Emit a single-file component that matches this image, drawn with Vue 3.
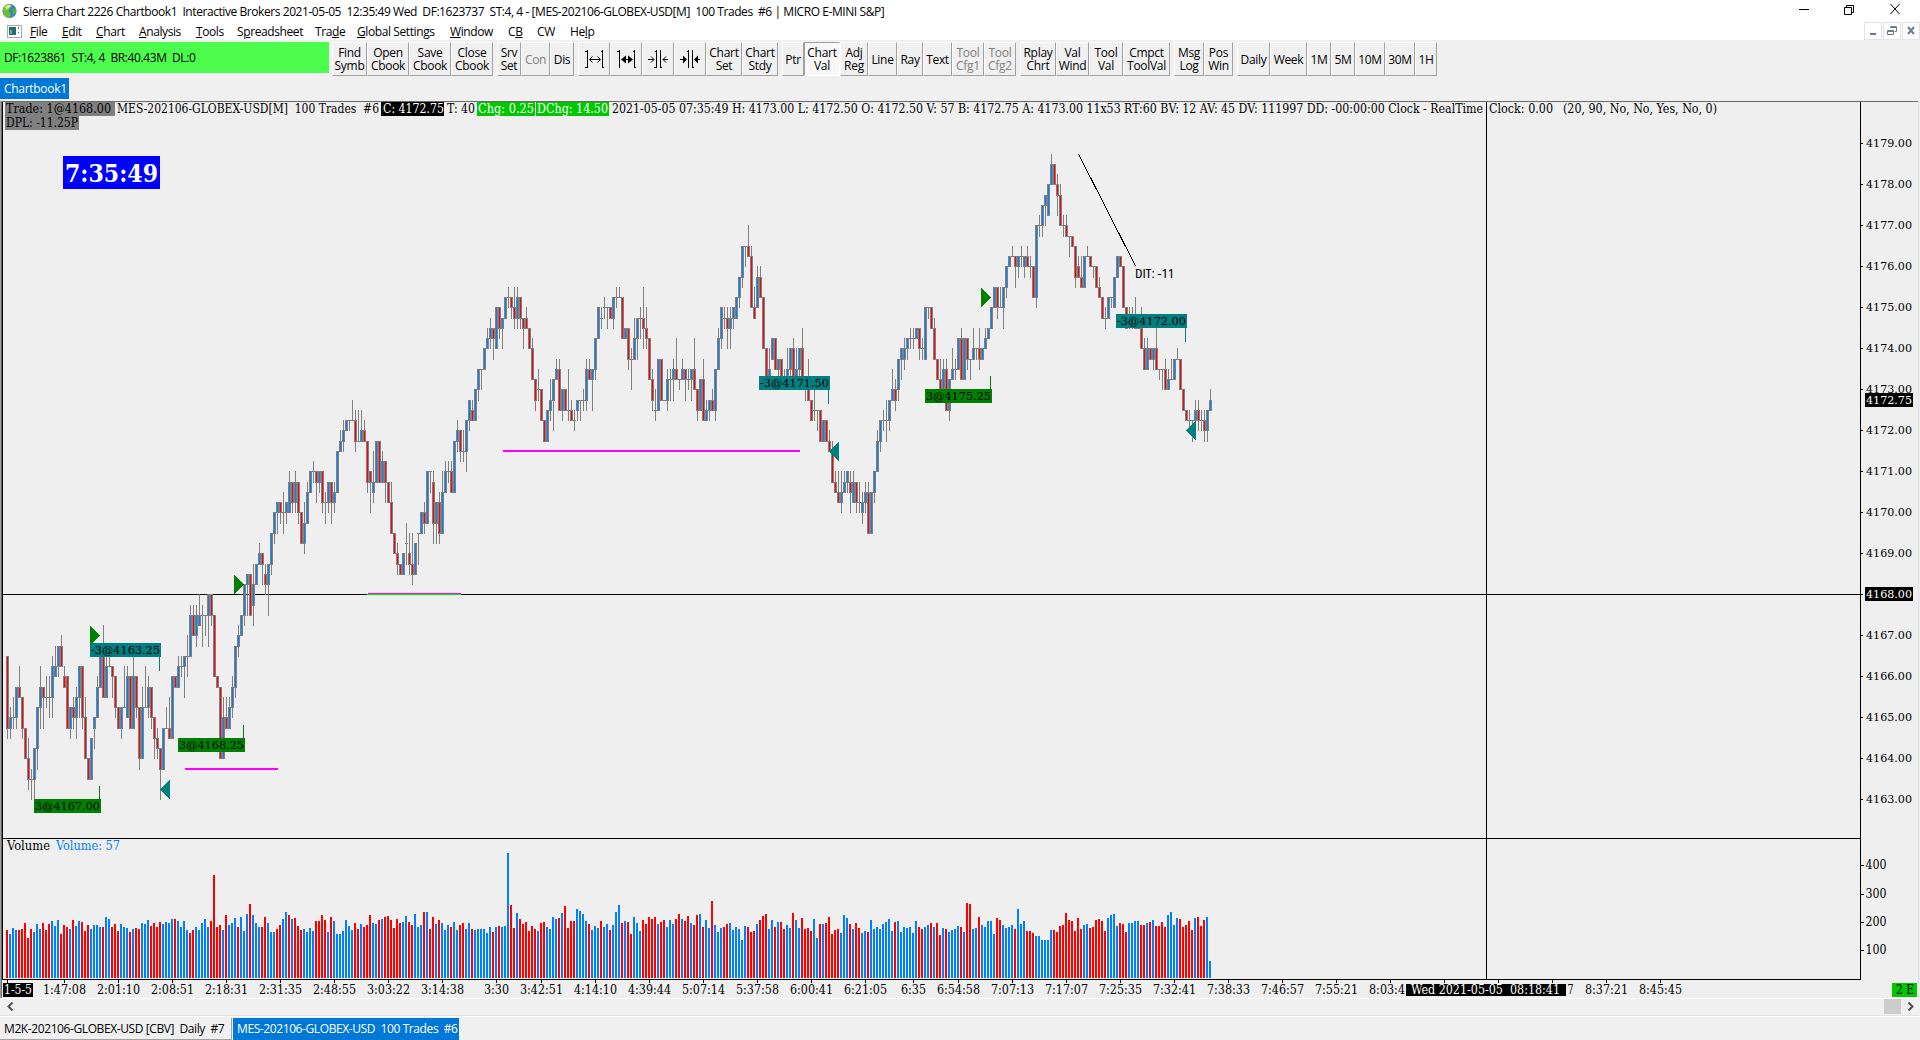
<template>
  <div class="app">
    <header class="title-bar">
      <svg class="globe" width="16" height="16" viewBox="0 0 16 16">
        <circle cx="7.5" cy="8" r="7" fill="#2f86c6" />
        <path d="M2 3.5C5 0 9 .5 10 2.500L8 6 6.500 8.500 9 11 7.500 15C3 14.500.5 11 .7 7z" fill="#6cc030" />
        <path d="M3 4C5 1.500 8 1.500 9 3L6 5.500 4 7z" fill="#e6f29a" />
        <path d="M11 5l3 1 .3 3-2.300 3-1.500-3z" fill="#58b030" />
      </svg>
      <span class="title-text">Sierra Chart 2226 Chartbook1&nbsp; Interactive Brokers 2021-05-05&nbsp; 12:35:49 Wed&nbsp; DF:1623737&nbsp; ST:4, 4 - [MES-202106-GLOBEX-USD[M]&nbsp; 100 Trades&nbsp; #6 | MICRO E-MINI S&amp;P]</span>
      <svg class="window-buttons" width="104" height="14" viewBox="0 0 104 14" fill="none" stroke="#000">
        <path d="M0 7.500h10M45.500 5.500h7v7h-7zM47.500 5.500v-2h7v7h-2M91.500 2l9 10M100.500 2l-9 10" />
      </svg>
    </header>

    <nav class="menu-bar">
      <svg class="doc-icon" width="15" height="13" viewBox="0 0 15 13">
        <rect x=".5" y=".5" width="14" height="12" fill="#fff" stroke="#aaa" />
        <rect x="2" y="2" width="7" height="8" fill="#2c6a72" />
        <path d="M3 9V5h2v4z" fill="#5ac08a" />
        <path d="M11.500 2v2M11.500 7v1" stroke="#666" />
      </svg>
      <span v-for="item in menu" :key="item.pre + item.key" :style="{ width: item.width + 'px' }" class="menu-item">{{ item.pre }}<u>{{ item.key }}</u>{{ item.post }}</span>
      <div class="mdi-buttons">
        <span><svg width="16" height="16" viewBox="0 0 16 16"><path d="M5 10h6v2H5z" fill="#6b7b8d" /></svg></span>
        <span><svg width="16" height="16" viewBox="0 0 16 16"><path d="M6.500 3.500h6v5h-2M3.500 7.500h6v4h-6zM6 4.500h7M3 8.500h7" fill="none" stroke="#6b7b8d" /></svg></span>
        <span><svg width="16" height="16" viewBox="0 0 16 16"><path d="M5 4l6 7M11 4l-6 7" stroke="#6b7b8d" stroke-width="2" /></svg></span>
      </div>
    </nav>

    <div class="toolbar">
      <div class="status">DF:1623861&nbsp; ST:4, 4&nbsp; BR:40.43M&nbsp; DL:0</div>
      <div v-for="(group, g) in toolGroups" :key="g" class="tool-group">
        <button
          v-for="tool in group"
          :key="tool.text"
          class="tool"
          :class="{ disabled: tool.off, pressed: tool.on }"
          :style="{ width: tool.width + 'px' }"
        >
          <svg v-if="tool.icon" width="20" height="22" viewBox="0 0 20 22" fill="none" stroke="#000">
            <path :d="tool.icon" />
            <path v-if="tool.heads" :d="tool.heads" fill="#000" stroke="none" />
          </svg>
          <template v-else>{{ tool.text }}</template>
        </button>
      </div>
    </div>

    <div class="book-tabs"><span class="book-tab">Chartbook1</span></div>

    <main class="chart">
      <svg width="1920" height="897" viewBox="0 101 1920 897">
        <rect x="0" y="101" width="1918" height="1" fill="#696969" />
        <rect x="0" y="101" width="1" height="897" fill="#a0a0a0" />
        <rect x="1" y="102" width="1" height="896" fill="#696969" />
        <rect x="2" y="102" width="1" height="878" fill="#000" />
        <rect x="1918" y="102" width="1" height="896" fill="#e3e3e3" />

        <!-- axes and panes -->
        <rect x="1860" y="102" width="1" height="878" />
        <rect x="3" y="838" width="1858" height="1" />
        <rect x="3" y="979" width="1858" height="1" />
        <rect x="3" y="594" width="1860" height="1" />

        <g v-for="p in prices" :key="p">
          <rect x="1861" :y="priceY((p - 4168) * 4)" width="2" height="1" />
          <text x="1866" :y="priceY((p - 4168) * 4) + 4" class="wide" textLength="46" lengthAdjust="spacingAndGlyphs">{{ p }}.00</text>
        </g>
        <g v-for="v in [100, 200, 300, 400]" :key="v">
          <rect x="1861" :y="Math.round(978.500 - v * 0.283)" width="3" height="1" />
          <text x="1865.500" :y="Math.round(978.500 - v * 0.283) + 4" textLength="21" lengthAdjust="spacingAndGlyphs">{{ v }}</text>
        </g>
        <rect x="1865" y="393" width="48" height="14" />
        <text x="1866" y="404" class="wide light" textLength="46" lengthAdjust="spacingAndGlyphs">4172.75</text>
        <rect x="1865" y="587" width="48" height="14" />
        <text x="1866" y="598" class="wide light" textLength="46" lengthAdjust="spacingAndGlyphs">4168.00</text>

        <!-- price bars -->
        <g v-for="c in candles" :key="c.x">
          <rect :x="c.x" :y="c.high" width="1" :height="c.low - c.high + 1" fill="#808080" />
          <rect :x="c.x - 1" :y="c.top" width="3" :height="c.bottom - c.top + 1" fill="#808080" />
          <rect v-if="c.bottom > c.top" :x="c.x" :y="c.top + 1" width="1" :height="c.bottom - c.top - 1" :fill="c.color" />
        </g>

        <!-- volume bars -->
        <rect v-for="v in volumes" :key="v.x" :x="v.x" :y="978 - v.height" width="2" :height="v.height" :fill="v.color" />

        <!-- support lines -->
        <path d="M185 769h93M503 451h297" stroke="#f0f" stroke-width="2" />
        <rect x="368" y="593" width="93" height="1" fill="#f0f" />
        <rect x="367" y="594" width="94" height="1" fill="#00f000" />

        <!-- fills -->
        <g v-for="f in fills" :key="f.text + f.x">
          <rect :x="f.stem" :y="f.stemY" width="1" height="14" :fill="f.color" />
          <rect :x="f.x" :y="f.y" :width="f.width" height="14" :fill="f.color" />
          <text :x="f.x + 1" :y="f.y + 11" class="wide" :textLength="f.width - 2" lengthAdjust="spacingAndGlyphs">{{ f.text }}</text>
        </g>
        <path d="M90 626l10 9.500-10 9.500zM234 575l10 9.500-10 9.500zM981 288l10 9.500-10 9.500z" fill="#008000" />
        <path d="M170 780l-10 9.500 10 9.500zM839 442l-10 9.500 10 9.500zM1196 421l-10 9.500 10 9.500z" fill="#008080" />

        <path d="M1078.500 154l57 112" stroke="#000" fill="none" />
        <text x="1135" y="278" class="ui" textLength="39" lengthAdjust="spacingAndGlyphs">DIT: -11</text>

        <rect x="1486" y="102" width="1" height="877" />

        <!-- chart header -->
        <rect x="5" y="102" width="110" height="14" fill="#808080" />
        <rect x="5" y="116" width="74" height="14" fill="#808080" />
        <rect x="381" y="102" width="63" height="14" />
        <rect x="477" y="102" width="58" height="14" fill="#00c800" />
        <rect x="536" y="102" width="73" height="14" fill="#00c800" />
        <text
          v-for="h in header"
          :key="h.text"
          :x="h.x"
          :y="h.y || 113"
          :textLength="h.end - h.x"
          :fill="h.fill || '#000'"
          lengthAdjust="spacingAndGlyphs"
        >{{ h.text }}</text>

        <rect x="63" y="156" width="97" height="33" fill="#00f" />
        <text x="65" y="182" class="clock" textLength="93" lengthAdjust="spacingAndGlyphs">7:35:49</text>

        <!-- time axis -->
        <g v-for="t in times" :key="t.x">
          <rect :x="t.x" y="980" width="1" height="3" />
          <text v-if="t.text" :x="t.x + 0.500" y="994" text-anchor="middle" :textLength="t.text.length > 4 ? 43 : 25" lengthAdjust="spacingAndGlyphs">{{ t.text }}</text>
        </g>
        <text x="1369" y="994" textLength="36" lengthAdjust="spacingAndGlyphs">8:03:4</text>
        <text x="1567.500" y="994" textLength="6" lengthAdjust="spacingAndGlyphs">7</text>
        <rect x="3" y="983" width="30" height="14" />
        <text x="4" y="994" class="light" textLength="28" lengthAdjust="spacingAndGlyphs">1-5-5</text>
        <rect x="1406" y="984" width="160" height="12" />
        <text x="1411" y="994" class="light" textLength="149" lengthAdjust="spacingAndGlyphs">Wed 2021-05-05&nbsp; 08:18:41</text>
        <rect x="1892" y="983" width="25" height="14" fill="#00c800" />
        <text x="1896" y="994" textLength="18" lengthAdjust="spacingAndGlyphs">2 E</text>
      </svg>
    </main>

    <div class="scrollbar">
      <svg width="7" height="9" viewBox="0 0 7 9"><path d="M5.500 .5l-4 4 4 4" fill="none" stroke="#505050" stroke-width="2" /></svg>
      <span class="thumb"></span>
      <svg width="7" height="9" viewBox="0 0 7 9"><path d="M1.500 .5l4 4-4 4" fill="none" stroke="#505050" stroke-width="2" /></svg>
    </div>

    <footer class="sheet-tabs">
      <span class="sheet first">M2K-202106-GLOBEX-USD [CBV]&nbsp; Daily&nbsp; #7</span>
      <span class="sheet active">MES-202106-GLOBEX-USD&nbsp; 100 Trades&nbsp; #6</span>
    </footer>
  </div>
</template>

<script setup>
const menu = [
  { pre: '', key: 'F', post: 'ile', width: 18 },
  { pre: '', key: 'E', post: 'dit', width: 20 },
  { pre: '', key: 'C', post: 'hart', width: 29 },
  { pre: '', key: 'A', post: 'nalysis', width: 43 },
  { pre: '', key: 'T', post: 'ools', width: 27 },
  { pre: 'S', key: 'p', post: 'readsheet', width: 64 },
  { pre: 'Tra', key: 'd', post: 'e', width: 28 },
  { pre: '', key: 'G', post: 'lobal Settings', width: 79 },
  { pre: '', key: 'W', post: 'indow', width: 44 },
  { pre: 'C', key: 'B', post: '', width: 15 },
  { pre: 'CW', key: '', post: '', width: 19 },
  { pre: 'He', key: 'l', post: 'p', width: 25 }
]

const toolGroups = [
  [
    { text: 'Find Symb', width: 35 },
    { text: 'Open Cbook', width: 42 },
    { text: 'Save Cbook', width: 42 },
    { text: 'Close Cbook', width: 42 }
  ],
  [
    { text: 'Srv Set', width: 24 },
    { text: 'Con', width: 29, off: true },
    { text: 'Dis', width: 24 }
  ],
  [
    { text: 'i1', width: 32, icon: 'M3.500 2v18M18.500 2v18M1 3.500h2M1 19.500h2M17 3.500h1M19 19.500h1M6 11.500h10M8.500 8.500l-3 3 3 3M13.500 8.500l3 3-3 3' },
    { text: 'i2', width: 32, icon: 'M3.500 2v18M18.500 2v18M1 3.500h2M17 3.500h1M19 19.500h1M6 11.500h10', heads: 'M5 11.500l5-4v8zM17 11.500l-5-4v8z' },
    { text: 'i3', width: 32, icon: 'M8.500 2v18M12.500 2v18M7 3.500h1M6 19.500h2M13 19.500h1M0 11.500h6M21 11.500h-6M3 8.500l3 3-3 3M18 8.500l-3 3 3 3' },
    { text: 'i4', width: 32, icon: 'M8.500 2v18M12.500 2v18M7 3.500h1M13 19.500h1M0 11.500h6M21 11.500h-6', heads: 'M7 11.500l-4-4v8zM14 11.500l4-4v8z' },
    { text: 'Chart Set', width: 36 },
    { text: 'Chart Stdy', width: 36 }
  ],
  [
    { text: 'Ptr', width: 22 },
    { text: 'Chart Val', width: 36, on: true },
    { text: 'Adj Reg', width: 28 },
    { text: 'Line', width: 29 },
    { text: 'Ray', width: 26 },
    { text: 'Text', width: 29 },
    { text: 'Tool Cfg1', width: 32, off: true },
    { text: 'Tool Cfg2', width: 32, off: true }
  ],
  [
    { text: 'Rplay Chrt', width: 36 },
    { text: 'Val Wind', width: 33 },
    { text: 'Tool Val', width: 34 },
    { text: 'Cmpct ToolVal', width: 47 }
  ],
  [
    { text: 'Msg Log', width: 30 },
    { text: 'Pos Win', width: 29 }
  ],
  [
    { text: 'Daily', width: 33 },
    { text: 'Week', width: 37 },
    { text: '1M', width: 24 },
    { text: '5M', width: 24 },
    { text: '10M', width: 30 },
    { text: '30M', width: 30 },
    { text: '1H', width: 22 }
  ]
]

const header = [
  { text: 'Trade: 1@4168.00', x: 6, end: 111 },
  { text: 'DPL: -11.25P', x: 6, end: 78, y: 127 },
  { text: 'MES-202106-GLOBEX-USD[M]\u00a0 100 Trades\u00a0 #6', x: 117, end: 379 },
  { text: 'C: 4172.75', x: 383, end: 444, fill: '#fff' },
  { text: 'T: 40', x: 447, end: 475 },
  { text: 'Chg: 0.25', x: 478, end: 534, fill: '#fff' },
  { text: 'DChg: 14.50', x: 537, end: 608, fill: '#fff' },
  { text: '2021-05-05 07:35:49 H: 4173.00 L: 4172.50 O: 4172.50 V: 57 B: 4172.75 A: 4173.00 11x53 RT:60 BV: 12 AV: 45 DV: 111997 DD: -00:00:00 Clock - RealTime', x: 612, end: 1483 },
  { text: 'Clock: 0.00', x: 1489, end: 1553 },
  { text: '(20, 90, No, No, Yes, No, 0)', x: 1563, end: 1717 },
  { text: 'Volume', x: 7, end: 50, y: 850 },
  { text: 'Volume: 57', x: 56, end: 120, y: 850, fill: '#0080ff' }
]

const prices = Array.from({ length: 17 }, (_, i) => 4163 + i)

// one tick is 0.25 points, level 0 sits at 4168.00
const priceY = (tick) => Math.floor(594.9 - tick * 10.25)
const barX = (i) => 7 + i * 3

// open high low close, in ticks from 4168.00
const bars = `
-6 -6 -14 -13,-13 -11 -14 -12,-12 -10 -13 -12,-12 -9 -13 -9,-9 -7 -10 -10,-10 -10 -14 -13,-13 -13 -16 -16,-16 -14 -19 -18,-18 -17 -20 -18,-18 -15 -20 -15,
-15 -11 -17 -11,-11 -7 -13 -9,-9 -9 -13 -10,-10 -8 -11 -10,-10 -8 -12 -10,-10 -6 -12 -7,-8 -5 -8 -7,-7 -5 -8 -5,-5 -4 -7 -7,-8 -7 -9 -9,
-8 -8 -13 -13,-13 -11 -14 -11,-11 -10 -13 -12,-12 -9 -14 -10,-10 -7 -12 -7,-7 -7 -13 -12,-12 -10 -16 -16,-16 -16 -18 -18,-18 -14 -18 -14,-13 -12 -15 -12,
-12 -8 -12 -9,-9 -5 -9 -5,-5 -3 -10 -10,-10 -6 -10 -7,-7 -6 -7 -7,-7 -7 -10 -8,-8 -8 -12 -11,-11 -11 -13 -13,-13 -11 -14 -11,-11 -7 -11 -11,
-12 -7 -12 -8,-8 -8 -13 -13,-13 -6 -13 -8,-8 -8 -12 -11,-11 -11 -17 -16,-16 -9 -16 -11,-11 -7 -11 -11,-11 -8 -12 -9,-9 -9 -13 -12,-12 -12 -16 -14,
-14 -13 -16 -15,-15 -15 -20 -17,-17 -13 -17 -13,-13 -11 -13 -13,-13 -10 -14 -14,-14 -8 -14 -8,-8 -8 -9 -9,-9 -6 -9 -7,-7 -6 -8 -7,-7 -6 -10 -6,
-6 -4 -8 -6,-6 -1 -6 -2,-2 -1 -4 -4,-4 -1 -5 -2,-3 0 -3 -2,-2 -1 -5 -2,-2 -2 -4 -2,-2 0 -5 0,0 0 -3 -2,-2 -2 -8 -8,
-8 -8 -9 -9,-9 -9 -16 -16,-16 -10 -16 -12,-12 -10 -13 -13,-13 -10 -13 -11,-11 -8 -12 -9,-9 -5 -10 -5,-5 -3 -6 -4,-4 -2 -4 -2,-2 1 -3 1,
1 2 -2 2,2 2 -2 -2,-1 3 -3 1,1 3 1 3,3 5 3 4,4 4 1 3,2 3 0 1,1 3 -2 3,3 6 2 6,6 8 5 8,
8 9 6 9,9 9 7 8,8 10 6 8,8 9 7 9,8 12 8 11,11 11 8 9,9 12 8 11,11 11 7 8,8 8 5 5,5 9 4 7,
7 11 7 10,10 12 10 12,12 13 11 12,12 12 9 11,11 12 10 12,12 12 8 9,9 10 7 9,9 11 8 11,11 11 7 9,9 11 8 10,
10 14 10 14,14 16 14 15,15 17 14 16,16 17 16 17,17 17 16 17,17 19 17 17,17 18 14 15,15 18 15 15,15 18 15 16,16 17 15 15,
15 15 10 11,12 12 8 11,10 14 9 11,11 15 11 15,15 15 11 11,11 14 11 13,13 13 9 11,11 11 9 9,9 11 6 6,6 6 4 4,
4 5 2 3,3 3 2 2,2 4 2 4,5 7 3 5,4 6 2 3,3 6 1 2,2 5 2 5,6 6 3 6,6 8 6 8,8 9 6 7,
7 12 7 12,12 12 10 12,11 12 5 7,7 9 5 9,9 10 5 6,6 12 6 10,10 13 10 12,12 13 11 12,12 13 10 10,10 15 10 15,
15 17 14 16,16 16 13 14,14 16 13 14,14 17 12 17,17 19 16 19,18 19 17 17,17 20 17 20,20 22 19 22,22 22 20 22,22 24 22 24,
24 26 24 25,25 27 24 26,26 26 23 25,24 28 24 28,28 28 25 26,26 27 24 27,27 29 27 29,29 30 28 29,29 29 27 28,28 30 26 27,
27 30 26 29,29 29 26 27,27 27 24 26,27 28 26 26,26 26 24 24,24 25 21 21,21 21 18 19,20 22 19 20,20 20 17 17,17 17 15 15,
15 18 15 18,18 21 17 19,19 21 16 21,21 23 21 22,22 23 18 18,18 20 17 20,20 20 18 18,18 22 17 18,18 19 17 17,17 18 16 17,
18 19 17 19,19 19 17 19,19 20 18 19,19 23 18 22,22 23 21 21,21 22 18 22,22 25 21 25,25 28 25 28,27 28 26 27,28 29 27 28,
28 28 26 28,28 28 27 27,27 29 26 29,29 30 28 29,29 30 29 29,29 29 25 25,25 26 25 26,26 26 22 23,23 24 20 23,23 27 23 25,
25 27 23 27,27 28 25 27,27 30 24 26,26 28 24 25,25 25 21 21,21 22 18 19,18 20 17 18,18 23 18 23,23 23 19 19,19 19 19 19,
19 22 18 21,21 22 19 21,21 23 19 22,22 25 21 21,21 21 20 21,21 23 21 22,22 22 19 21,21 22 20 21,21 22 19 22,22 25 20 20,
20 20 17 18,18 21 18 21,21 23 17 17,17 19 17 18,18 19 17 19,19 20 18 18,18 22 17 22,22 26 22 25,25 28 24 28,27 28 26 27,
27 28 24 26,26 28 24 27,27 28 26 28,27 29 27 29,29 31 28 31,31 34 30 34,34 34 32 34,34 36 33 33,33 34 28 28,28 30 27 27,
28 32 28 31,31 32 29 29,29 29 24 24,24 24 20 21,21 24 21 22,23 25 23 25,25 25 22 22,22 23 21 23,23 23 21 21,21 22 20 21,
21 24 20 22,22 24 21 24,24 25 21 21,21 24 20 22,22 24 21 24,24 26 21 21,21 21 19 21,21 23 19 19,19 19 17 17,18 20 17 18,
18 18 16 18,18 18 15 15,15 17 15 17,17 17 15 15,15 16 14 14,14 15 11 11,11 12 10 10,10 12 9 9,9 12 8 10,10 12 10 11,
11 12 10 12,11 12 8 10,9 12 9 11,11 11 8 9,9 11 8 9,8 10 7 9,9 11 8 10,10 11 6 6,6 10 6 10,10 12 9 12,
12 16 12 15,15 17 14 17,17 18 16 17,17 19 15 17,17 19 16 19,19 22 19 20,20 21 18 19,20 23 19 23,23 24 21 24,23 25 22 24,
24 25 23 25,25 26 24 25,25 26 24 25,25 26 25 26,26 26 23 24,24 25 23 24,23 28 23 28,28 28 27 28,28 28 26 26,26 27 23 23,
23 23 21 21,21 23 20 20,19 23 19 22,22 23 18 18,18 21 17 21,21 24 21 22,22 23 21 22,22 25 22 25,25 26 21 21,21 25 21 25,
25 25 22 23,23 23 21 23,23 26 23 24,24 24 23 24,24 26 22 23,23 24 23 24,24 26 24 25,25 26 25 26,26 28 26 28,28 30 28 30,
30 30 27 28,28 30 28 28,28 30 26 30,30 32 29 32,32 33 32 33,33 34 33 33,33 33 30 32,32 33 31 33,33 34 32 33,32 33 31 33,
33 34 32 32,32 33 31 32,32 32 29 29,29 36 28 36,36 37 35 36,36 38 35 38,38 39 36 39,37 40 37 40,40 43 40 42,42 42 40 40,
40 41 37 39,39 40 36 36,36 37 35 36,36 37 35 35,35 35 33 35,35 35 34 34,34 34 30 31,32 33 31 31,31 33 30 30,30 33 30 33,
33 34 33 33,33 33 32 32,32 32 31 32,32 32 30 30,30 31 29 29,29 29 27 27,27 28 26 27,27 29 27 29,29 29 28 29,28 31 28 31,
31 33 31 33,33 33 32 32,32 32 28 28,28 28 26 26,27 28 26 27,27 28 26 27,27 29 26 26,26 27 26 26,26 28 24 24,24 25 22 22,
22 25 22 24,24 24 23 23,23 24 22 24,24 27 22 22,22 22 21 22,22 22 20 22,22 23 20 20,20 22 20 21,21 23 21 21,21 23 21 23,
23 24 23 23,23 23 20 20,20 20 18 18,18 18 17 17,17 18 16 17,17 17 15 17,17 19 17 18,18 19 16 17,17 18 16 17,17 18 15 16,
16 18 15 18,18 20 18 19`

const candles = bars.split(',').map((bar, i) => {
  const [open, high, low, close] = bar.trim().split(' ').map(Number)
  return {
    x: barX(i),
    high: priceY(high),
    low: priceY(low),
    top: priceY(Math.max(open, close)),
    bottom: priceY(Math.min(open, close)),
    color: close >= open ? '#0080ff' : '#ff0000'
  }
})

// bar heights, negative for down bars
const volumeData = `
-48 44 50 48 -48 -49 -55 -40 -49 46 54 49 -55 -48 -54 57 52 58 -44 -53 -51 49 -58 52 57 -56 -47 -53 49 53
53 51 -51 61 59 -51 -54 -47 54 51 50 -46 49 -50 -49 55 54 58 -52 -55 -51 -56 54 56 55 59 -59 57 51 57
48 -45 -48 51 48 55 59 51 -57 -103 -51 -53 48 -63 53 55 60 -51 61 47 64 -74 63 55 51 -51 -61 55 46 46
-49 -53 59 66 -63 59 -60 -52 -48 49 46 50 47 -57 -57 -63 -58 46 -61 57 44 44 47 58 52 48 -55 -49 54 -51
-53 -63 55 54 -58 59 -61 -62 -58 -50 -59 -55 56 62 -56 -53 64 51 53 -66 66 -49 -61 54 -58 55 48 53 -51 56
48 -53 -55 49 55 -49 48 49 49 49 45 51 -46 51 -52 51 52 125 -73 -50 65 -59 -54 -56 -47 -52 -49 47 -55 -56
51 49 61 59 -60 65 -72 -50 -57 -57 69 67 64 57 -54 48 52 50 -57 51 54 -48 53 66 73 -55 57 -56 -44 61
55 47 -58 -54 -61 -59 -61 54 -56 -58 51 58 54 -59 -64 59 -57 -62 55 -53 -63 64 -51 58 50 -77 53 46 50 -51
-54 55 48 51 49 38 52 -51 -46 -47 54 -58 -62 -64 49 58 -51 56 -56 -49 53 50 -65 58 50 -60 -49 -50 -47 59
40 -54 54 -55 -61 -44 -48 -49 45 63 60 -54 49 -55 -50 45 47 -46 58 49 51 49 54 56 59 47 -56 57 46 51
50 51 45 57 -51 -49 51 53 -55 51 -55 -43 50 -49 46 48 49 52 -51 46 -75 -74 49 50 -61 53 51 57 57 44
-60 -58 53 50 51 53 -49 69 54 57 -47 -47 -45 42 42 38 38 38 48 -48 -46 -52 -53 -65 -58 -57 -47 -60 -49 53
54 -50 -51 -58 -59 -57 -47 60 63 64 52 -55 -54 -46 55 55 57 57 -53 -53 55 -56 58 -52 -52 -56 -51 63 66 53
60 -59 -51 -53 -57 -48 60 -61 -52 -58 61 17`

const volumes = volumeData.trim().split(/\s+/).map((v, i) => ({
  x: barX(i) - 1,
  height: Math.abs(v),
  color: v < 0 ? '#ff0000' : '#0080ff'
}))

const fills = [
  { text: '-3@4163.25', x: 90, y: 643, width: 71, color: '#008080', stem: 159, stemY: 657 },
  { text: '3@4168.25', x: 178, y: 738, width: 67, color: '#008000', stem: 243, stemY: 725 },
  { text: '3@4167.00', x: 34, y: 799, width: 67, color: '#008000', stem: 99, stemY: 786 },
  { text: '-3@4171.50', x: 759, y: 376, width: 71, color: '#008080', stem: 828, stemY: 390 },
  { text: '3@4175.25', x: 925, y: 389, width: 67, color: '#008000', stem: 990, stemY: 376 },
  { text: '-3@4172.00', x: 1116, y: 314, width: 71, color: '#008080', stem: 1185, stemY: 328 }
]

const times = [
  [7, ''], [64, '1:47:08'], [118, '2:01:10'], [172, '2:08:51'], [226, '2:18:31'], [280, '2:31:35'],
  [334, '2:48:55'], [388, '3:03:22'], [442, '3:14:38'], [496, '3:30'], [541, '3:42:51'], [595, '4:14:10'],
  [649, '4:39:44'], [703, '5:07:14'], [757, '5:37:58'], [811, '6:00:41'], [865, '6:21:05'], [913, '6:35'],
  [958, '6:54:58'], [1012, '7:07:13'], [1066, '7:17:07'], [1120, '7:25:35'], [1174, '7:32:41'], [1228, '7:38:33'],
  [1282, '7:46:57'], [1336, '7:55:21'], [1390, ''], [1444, ''], [1498, ''], [1552, ''], [1606, '8:37:21'], [1660, '8:45:45']
].map(([x, text]) => ({ x, text }))
</script>

<style>
body {
  margin: 0;
  background: #f0f0f0;
}
</style>

<style scoped>
.app {
  width: 1920px;
  height: 1040px;
  display: flex;
  flex-direction: column;
  overflow: hidden;
  background: #f0f0f0;
  color: #000;
  font-family: "Open Sans", "Noto Sans", sans-serif;
  font-size: 12px;
  letter-spacing: -0.4px;
  white-space: nowrap;
}

.title-bar {
  display: flex;
  align-items: center;
  height: 23px;
  padding: 0 17px 0 2px;
  background: #fff;
}

.title-text {
  margin-left: 5px;
  letter-spacing: -0.43px;
}

.window-buttons {
  margin-left: auto;
  margin-top: -4px;
}

.menu-bar {
  display: flex;
  align-items: center;
  gap: 14px;
  height: 18px;
  padding-left: 7px;
  background: #fff;
}

.doc-icon {
  margin-right: -6px;
}

.mdi-buttons {
  display: flex;
  gap: 1px;
  margin-left: auto;
}

.mdi-buttons span {
  width: 16px;
  height: 16px;
  border: 1px solid #e3e3e3;
}

.mdi-buttons svg {
  display: block;
}

.toolbar {
  display: flex;
  align-items: flex-start;
  height: 35px;
  padding-top: 2px;
}

.status {
  width: 325px;
  height: 31px;
  line-height: 32px;
  padding-left: 4px;
  margin-right: 3px;
  background: #4dfd4d;
}

.tool-group {
  display: flex;
  height: 34px;
  margin-right: 4px;
}

.tool {
  display: flex;
  align-items: center;
  justify-content: center;
  box-sizing: border-box;
  height: 34px;
  margin: 0;
  padding: 0;
  border: 1px solid;
  border-color: #fff #a0a0a0 #a0a0a0 #fff;
  background: #f0f0f0;
  color: #000;
  font: inherit;
  line-height: 13px;
  letter-spacing: -0.3px;
  text-align: center;
  white-space: normal;
}

.tool svg {
  flex: none;
}

.tool.disabled {
  color: #808080;
}

.tool.pressed {
  border-color: #a0a0a0 #fff #fff #a0a0a0;
  background: #f8f8f8;
}

.book-tabs {
  height: 25px;
  padding-top: 1px;
  box-sizing: border-box;
}

.book-tab {
  display: block;
  width: 65px;
  height: 21px;
  line-height: 21px;
  padding-left: 4px;
  letter-spacing: -0.3px;
  background: #0078d7;
  color: #fff;
}

.chart {
  height: 897px;
  background: #efefef;
}

.chart svg {
  display: block;
  shape-rendering: crispEdges;
}

.chart text {
  font-family: "DejaVu Serif Condensed", "DejaVu Serif", serif;
  font-stretch: condensed;
  font-size: 12px;
  letter-spacing: 0;
}

.chart text.wide {
  font-family: "DejaVu Serif", serif;
  font-stretch: normal;
  font-size: 10.5px;
}

.chart text.light {
  fill: #fff;
}

.chart text.ui {
  font-family: "Open Sans", sans-serif;
}

.chart text.clock {
  font-size: 25px;
  font-weight: bold;
  fill: #fff;
}

.scrollbar {
  display: flex;
  align-items: center;
  height: 16px;
  padding: 0 6px 0 7px;
  border-top: 1px solid #fff;
  border-bottom: 1px solid #e3e3e3;
}

.thumb {
  width: 17px;
  height: 15px;
  margin-left: auto;
  margin-right: 6px;
  background: #cdcdcd;
}

.sheet-tabs {
  display: flex;
  height: 24px;
  border-top: 1px solid #fff;
}

.sheet {
  box-sizing: border-box;
  height: 22px;
  line-height: 22px;
  margin-top: 1px;
  padding-left: 4px;
}

.sheet.first {
  width: 232px;
  border-right: 1px solid #a0a0a0;
  border-bottom: 1px solid #a0a0a0;
}

.sheet.active {
  width: 226px;
  margin-left: 1px;
  background: #0078d7;
  color: #fff;
}
</style>
